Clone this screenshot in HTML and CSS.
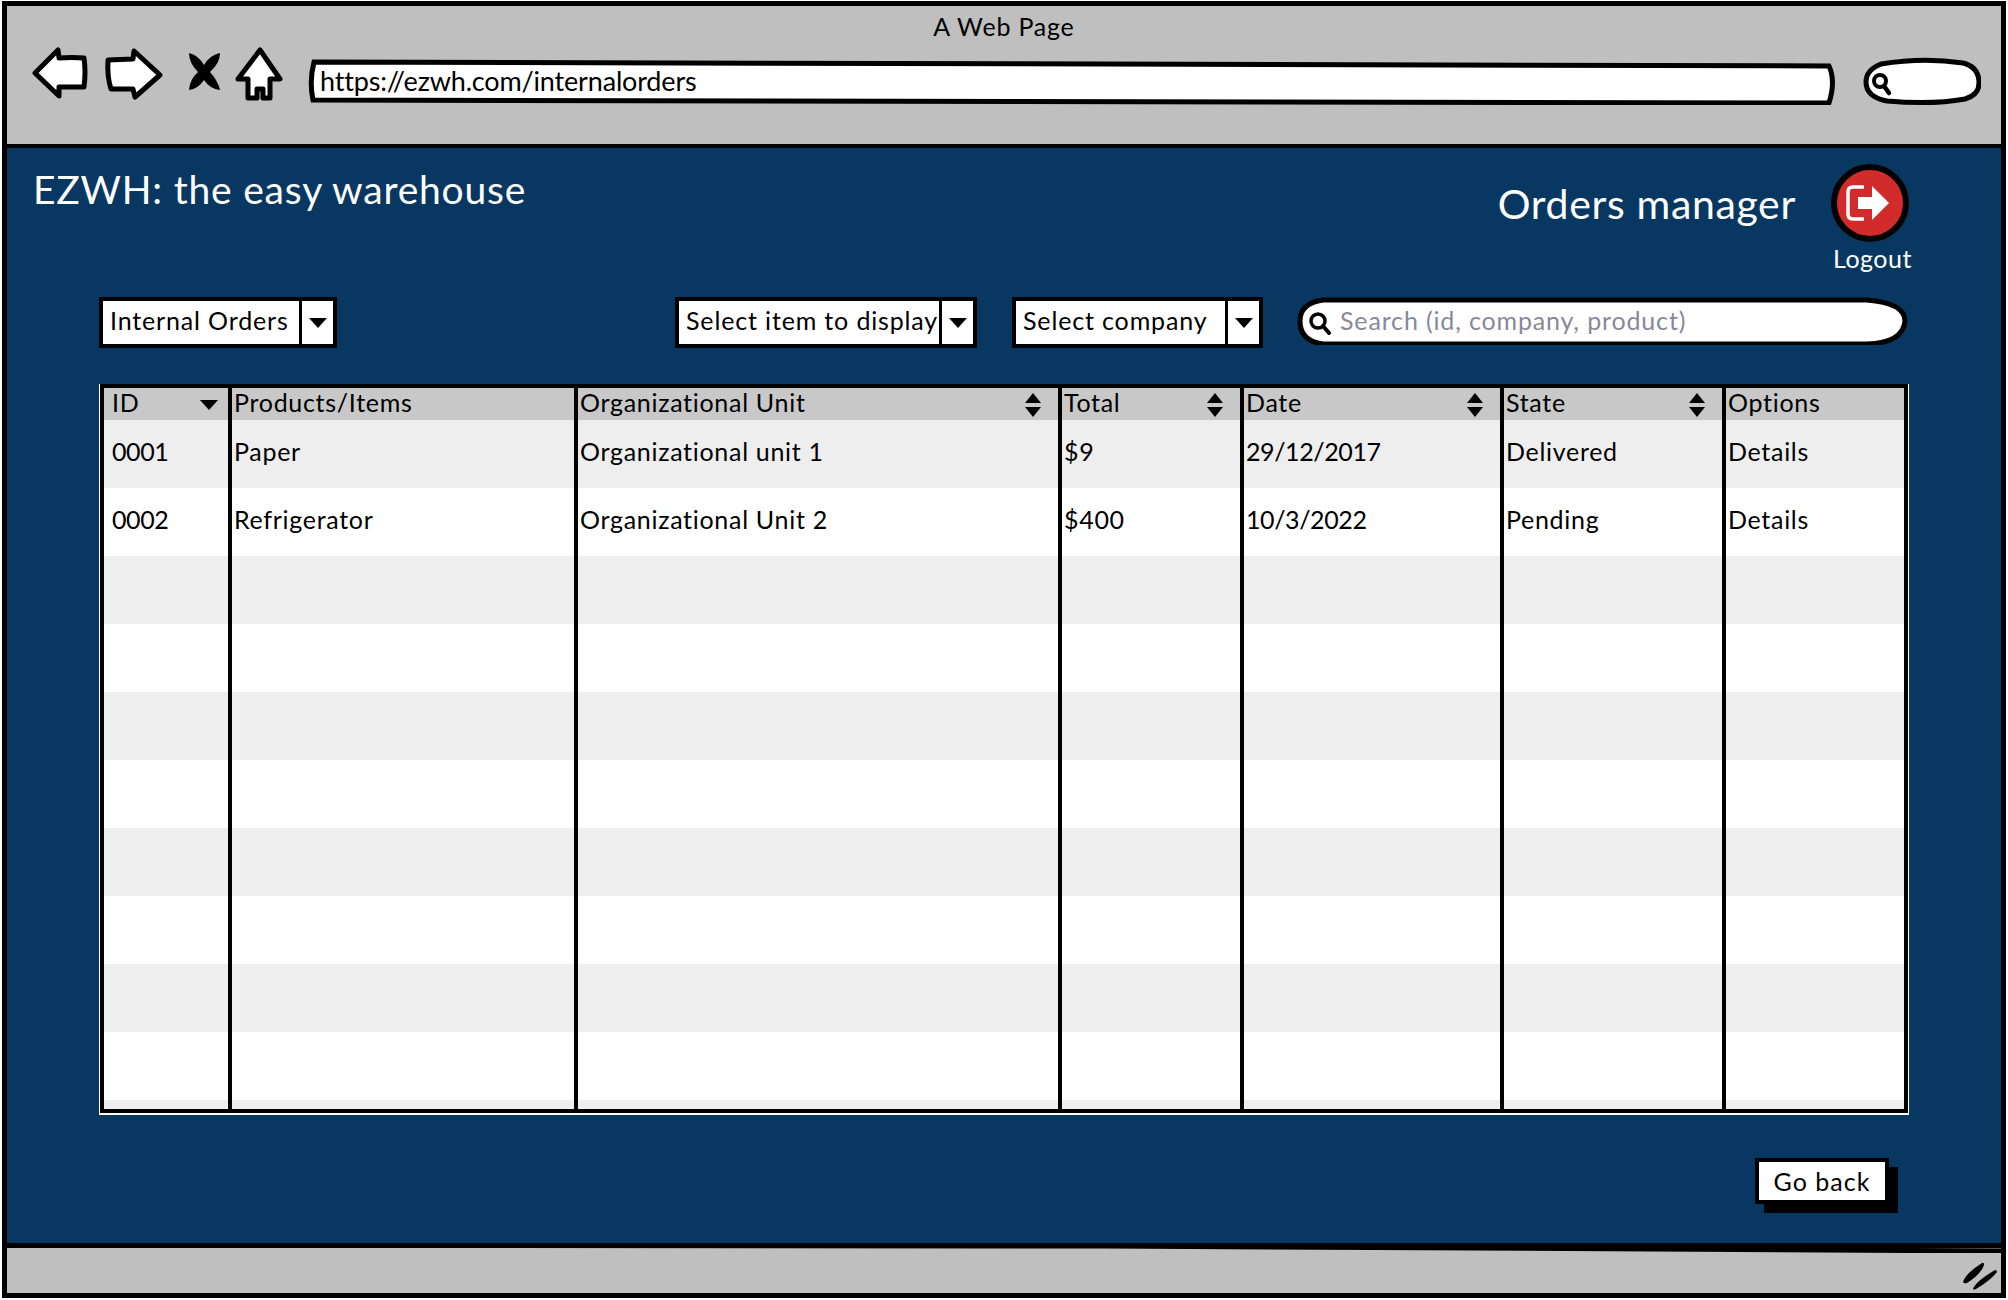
FILE: index.html
```html
<!DOCTYPE html>
<html lang="en">
<head>
    <meta charset="UTF-8">
    <title>A Web Page</title>
    <link rel="stylesheet" href="styles.css">
</head>
<body>
    <svg class="defs" width="0" height="0">
        <symbol id="sort" viewBox="0 0 18 26"><path d="M9 1 L17 11 H1 Z M1 15 H17 L9 25 Z"/></symbol>
        <symbol id="caret" viewBox="0 0 18 10"><path d="M0 0 H18 L9 10 Z"/></symbol>
    </svg>
    <div class="window">
        <header class="toolbar">
            <div class="page-title">A Web Page</div>
            <div class="nav-row">
                <svg class="nav-icons" width="252" height="56" viewBox="0 0 252 56">
                    <path class="nav-shape" d="M3 26 L26 3 L27 11 Q40 10 52 11 Q54 25 52 40 L27 40 L27 49 Z"/>
                    <path class="nav-shape" d="M76 13 L101 12 L102 4 L128 28 L103 50 L101 42 L79 42 Q75 30 76 13 Z"/>
                    <path d="M157 6 Q166 8 172 18 Q178 8 188 6 Q188 16 178 25 Q186 34 188 43 Q178 42 172 33 Q166 42 157 43 Q158 32 166 25 Q157 16 157 6 Z"/>
                    <path class="nav-shape" d="M228 3 L248 32 L238 32 L238 51 L231 51 L231 42 L225 42 L225 51 L216 51 L216 32 L206 32 Z"/>
                </svg>
                <div class="url-bar">
                    <svg class="frame" viewBox="0 0 1524 46" preserveAspectRatio="none">
                        <path d="M6 3 C500 3 1000 5 1517 7 Q1524 22 1517 44 C1000 42 500 41 5 41 Q1 22 6 3 Z"/>
                    </svg>
                    <span class="url-text">https://ezwh.com/internalorders</span>
                </div>
                <svg class="mini-search" width="118" height="49" viewBox="0 0 118 49">
                    <path class="mini-shape" d="M18 7 Q60 0 100 6 Q116 10 116 26 Q116 38 102 42 Q70 48 24 44 Q3 40 3 25 Q3 13 18 7 Z"/>
                    <circle class="mini-lens" cx="17" cy="24" r="6"/>
                    <path class="mini-handle" d="M21 29 L26 36"/>
                </svg>
            </div>
        </header>

        <main class="main">
            <div class="head">
                <h1 class="brand">EZWH: the easy warehouse</h1>
                <div class="head-right">
                    <h2 class="role">Orders manager</h2>
                    <div class="logout">
                        <svg width="78" height="78" viewBox="0 0 78 78">
                            <circle cx="39" cy="39" r="36" fill="#d12b2b" stroke="#000" stroke-width="6"/>
                            <path d="M33 23 H22 Q17 23 17 28 V50 Q17 55 22 55 H33" fill="none" stroke="#fff" stroke-width="3.5"/>
                            <path d="M27 33 H41 V22 L58 39 L41 56 V45 H27 Z" fill="#fff"/>
                        </svg>
                        <span>Logout</span>
                    </div>
                </div>
            </div>

            <div class="filters">
                <div class="select select-type"><span class="select-label">Internal Orders</span><span class="select-btn"><svg width="18" height="10"><use href="#caret"/></svg></span></div>
                <div class="select select-item"><span class="select-label">Select item to display</span><span class="select-btn"><svg width="18" height="10"><use href="#caret"/></svg></span></div>
                <div class="select select-company"><span class="select-label">Select company</span><span class="select-btn"><svg width="18" height="10"><use href="#caret"/></svg></span></div>
                <div class="search">
                    <svg class="frame" viewBox="0 0 611 48" preserveAspectRatio="none">
                        <path d="M26 3 H570 Q608 6 608 24 Q606 46 570 47 H26 Q3 44 3 24 Q3 6 26 3 Z"/>
                    </svg>
                    <svg class="search-icon" width="24" height="24" viewBox="0 0 24 24">
                        <circle cx="10" cy="10" r="7" fill="none" stroke="#000" stroke-width="3.5"/>
                        <path d="M15 15 L21 22" stroke="#000" stroke-width="4" stroke-linecap="round"/>
                    </svg>
                    <span class="search-text">Search (id, company, product)</span>
                </div>
            </div>

            <div class="table-wrap">
                <table class="orders">
                    <colgroup>
                        <col class="c-id"><col class="c-prod"><col class="c-unit"><col class="c-total"><col class="c-date"><col class="c-state"><col class="c-opt">
                    </colgroup>
                    <thead>
                        <tr>
                            <th><div class="th-in th-id">ID<svg width="18" height="10"><use href="#caret"/></svg></div></th>
                            <th><div class="th-in">Products/Items</div></th>
                            <th><div class="th-in">Organizational Unit<svg width="18" height="26"><use href="#sort"/></svg></div></th>
                            <th><div class="th-in">Total<svg width="18" height="26"><use href="#sort"/></svg></div></th>
                            <th><div class="th-in">Date<svg width="18" height="26"><use href="#sort"/></svg></div></th>
                            <th><div class="th-in">State<svg width="18" height="26"><use href="#sort"/></svg></div></th>
                            <th><div class="th-in">Options</div></th>
                        </tr>
                    </thead>
                    <tbody>
                        <tr><td class="num">0001</td><td>Paper</td><td>Organizational unit 1</td><td>$9</td><td class="num">29/12/2017</td><td>Delivered</td><td>Details</td></tr>
                        <tr><td class="num">0002</td><td>Refrigerator</td><td>Organizational Unit 2</td><td>$400</td><td class="num">10/3/2022</td><td>Pending</td><td>Details</td></tr>
                        <tr><td></td><td></td><td></td><td></td><td></td><td></td><td></td></tr>
                        <tr><td></td><td></td><td></td><td></td><td></td><td></td><td></td></tr>
                        <tr><td></td><td></td><td></td><td></td><td></td><td></td><td></td></tr>
                        <tr><td></td><td></td><td></td><td></td><td></td><td></td><td></td></tr>
                        <tr><td></td><td></td><td></td><td></td><td></td><td></td><td></td></tr>
                        <tr><td></td><td></td><td></td><td></td><td></td><td></td><td></td></tr>
                        <tr><td></td><td></td><td></td><td></td><td></td><td></td><td></td></tr>
                        <tr><td></td><td></td><td></td><td></td><td></td><td></td><td></td></tr>
                        <tr><td></td><td></td><td></td><td></td><td></td><td></td><td></td></tr>
                    </tbody>
                </table>
            </div>

            <div class="actions">
                <button class="go-back">Go back</button>
            </div>
        </main>

        <footer class="statusbar">
            <svg class="status-line" viewBox="0 0 1994 10" preserveAspectRatio="none">
                <path d="M0 2 L1100 3 L1994 8"/>
            </svg>
            <svg class="grip" width="34" height="28" viewBox="0 0 34 28">
                <path d="M0 20 Q2 12 19 1 Q21 0 21 3 Q18 12 4 21 Q1 22 0 20 Z M10 27 Q12 20 32 8 Q34 8 34 10 Q28 18 13 27 Q10 28 10 27 Z"/>
            </svg>
        </footer>
    </div>
</body>
</html>
```

FILE: styles.css
```css
* {
    box-sizing: border-box;
}
body {
    margin: 0;
    background: #fff;
    font-family: Lato, "Noto Sans", sans-serif;
    color: #000;
}
.defs {
    position: absolute;
}
.window {
    margin: 1px 2px 2px;
    height: 1297px;
    border: 5px solid #000;
    display: flex;
    flex-direction: column;
}

/* browser toolbar */
.toolbar {
    height: 142px;
    background: #bfbfbf;
    border-bottom: 4px solid #000;
}
.page-title {
    height: 41px;
    padding-top: 4px;
    text-align: center;
    font-size: 25px;
    line-height: 32px;
    letter-spacing: .8px;
}
.nav-row {
    display: flex;
    align-items: flex-start;
    gap: 24px;
    padding: 0 20px 0 25px;
}
.nav-shape {
    fill: #fff;
    stroke: #000;
    stroke-width: 5;
    stroke-linejoin: round;
}
.url-bar {
    position: relative;
    flex: 1;
    height: 46px;
    margin-top: 12px;
    padding: 5px 0 0 12px;
    font-size: 27px;
    line-height: 34px;
    letter-spacing: -.17px;
}
.frame {
    position: absolute;
    left: 0;
    top: 0;
    width: 100%;
    height: 100%;
}
.frame path {
    fill: #fff;
    stroke: #000;
    stroke-width: 5;
}
.url-text {
    position: relative;
}
.mini-search {
    margin: 10px 0 0 3px;
}
.mini-shape {
    fill: #fff;
    stroke: #000;
    stroke-width: 5;
}
.mini-lens {
    fill: none;
    stroke: #000;
    stroke-width: 4;
}
.mini-handle {
    stroke: #000;
    stroke-width: 4.5;
    stroke-linecap: round;
}

/* app area */
.main {
    flex: 1;
    background: #083862;
    display: flex;
    flex-direction: column;
}
.head {
    display: flex;
    justify-content: space-between;
    height: 149px;
    padding: 16px 87px 0 26px;
    color: #fff;
}
.brand {
    margin: 3px 0 0;
    font-size: 39px;
    font-weight: 400;
    line-height: 44px;
    letter-spacing: .8px;
}
.head-right {
    display: flex;
    gap: 35px;
}
.role {
    margin: 17px 0 0;
    font-size: 41px;
    font-weight: 400;
    line-height: 46px;
    letter-spacing: .65px;
}
.logout {
    display: flex;
    flex-direction: column;
    align-items: center;
    font-size: 25px;
    line-height: 32px;
    letter-spacing: .5px;
}
.logout svg {
    display: block;
    margin-right: 5px;
}

.filters {
    display: flex;
    align-items: flex-start;
    margin: 0 93px 0 92px;
    height: 87px;
}
.select {
    display: flex;
    height: 51px;
    background: #fff;
    border: 4px solid #000;
    font-size: 25px;
    line-height: 39px;
    letter-spacing: .85px;
}
.select-type {
    width: 238px;
}
.select-item {
    width: 302px;
    margin-left: auto;
}
.select-company {
    width: 251px;
    margin-left: 35px;
}
.select-label {
    flex: 1;
    padding-left: 7px;
    white-space: nowrap;
}
.select-btn {
    width: 34px;
    border-left: 3px solid #000;
    display: flex;
    align-items: center;
    justify-content: center;
    flex: none;
}
.search {
    position: relative;
    width: 611px;
    height: 48px;
    margin-left: 34px;
    padding-left: 43px;
    color: #888898;
    font-size: 25px;
    line-height: 46px;
    letter-spacing: .85px;
}
.search-text {
    position: relative;
}
.search-icon {
    position: absolute;
    left: 11px;
    top: 14px;
}

/* orders table */
.table-wrap {
    height: 729px;
    margin: 0 93px;
    overflow: hidden;
    background: #fff;
    border: 4px solid #000;
    box-shadow: 0 1px 0 1px #fff;
}
.orders {
    width: 100%;
    table-layout: fixed;
    border-collapse: collapse;
    font-size: 25px;
    letter-spacing: .7px;
}
.c-id { width: 126px; }
.c-prod { width: 346px; }
.c-unit { width: 484px; }
.c-total { width: 182px; }
.c-date { width: 260px; }
.c-state { width: 222px; }
.orders th {
    height: 32px;
    padding: 0 0 0 2px;
    background: #c8c8c8;
    font-weight: 400;
    text-align: left;
    border-right: 4px solid #000;
}
.th-in {
    display: flex;
    justify-content: space-between;
    align-items: center;
    height: 32px;
    line-height: 28px;
    padding-right: 16px;
    margin-top: -4px;
}
.th-in svg {
    position: relative;
    top: 3px;
}
.th-id {
    padding-right: 10px;
}
.orders th:first-child, .orders td:first-child {
    padding-left: 8px;
}
.orders td {
    height: 68px;
    padding: 0 0 7px 2px;
    border-right: 4px solid #000;
    white-space: nowrap;
}
.orders td.num {
    letter-spacing: -.4px;
}
.orders th:last-child, .orders td:last-child {
    border-right: 0;
}
.orders tbody tr:nth-child(odd) td {
    background: #eee;
}
.orders tbody tr:nth-child(even) td {
    background: #fff;
}

.actions {
    display: flex;
    justify-content: flex-end;
    padding: 45px 112px 0 0;
}
.go-back {
    width: 134px;
    height: 46px;
    padding: 0;
    background: #fff;
    border: 4px solid #000;
    box-shadow: 9px 9px 0 0 #000;
    font-family: inherit;
    font-size: 25px;
    letter-spacing: 1px;
    color: #000;
}

.statusbar {
    position: relative;
    height: 50px;
    background: #bfbfbf;
    border-top: 5px solid #000;
    display: flex;
    justify-content: flex-end;
    align-items: flex-start;
    padding: 14px 4px 0 0;
}
.status-line {
    position: absolute;
    left: 0;
    top: -5px;
    width: 100%;
    height: 10px;
}
.status-line path {
    fill: none;
    stroke: #000;
    stroke-width: 5;
}
```
